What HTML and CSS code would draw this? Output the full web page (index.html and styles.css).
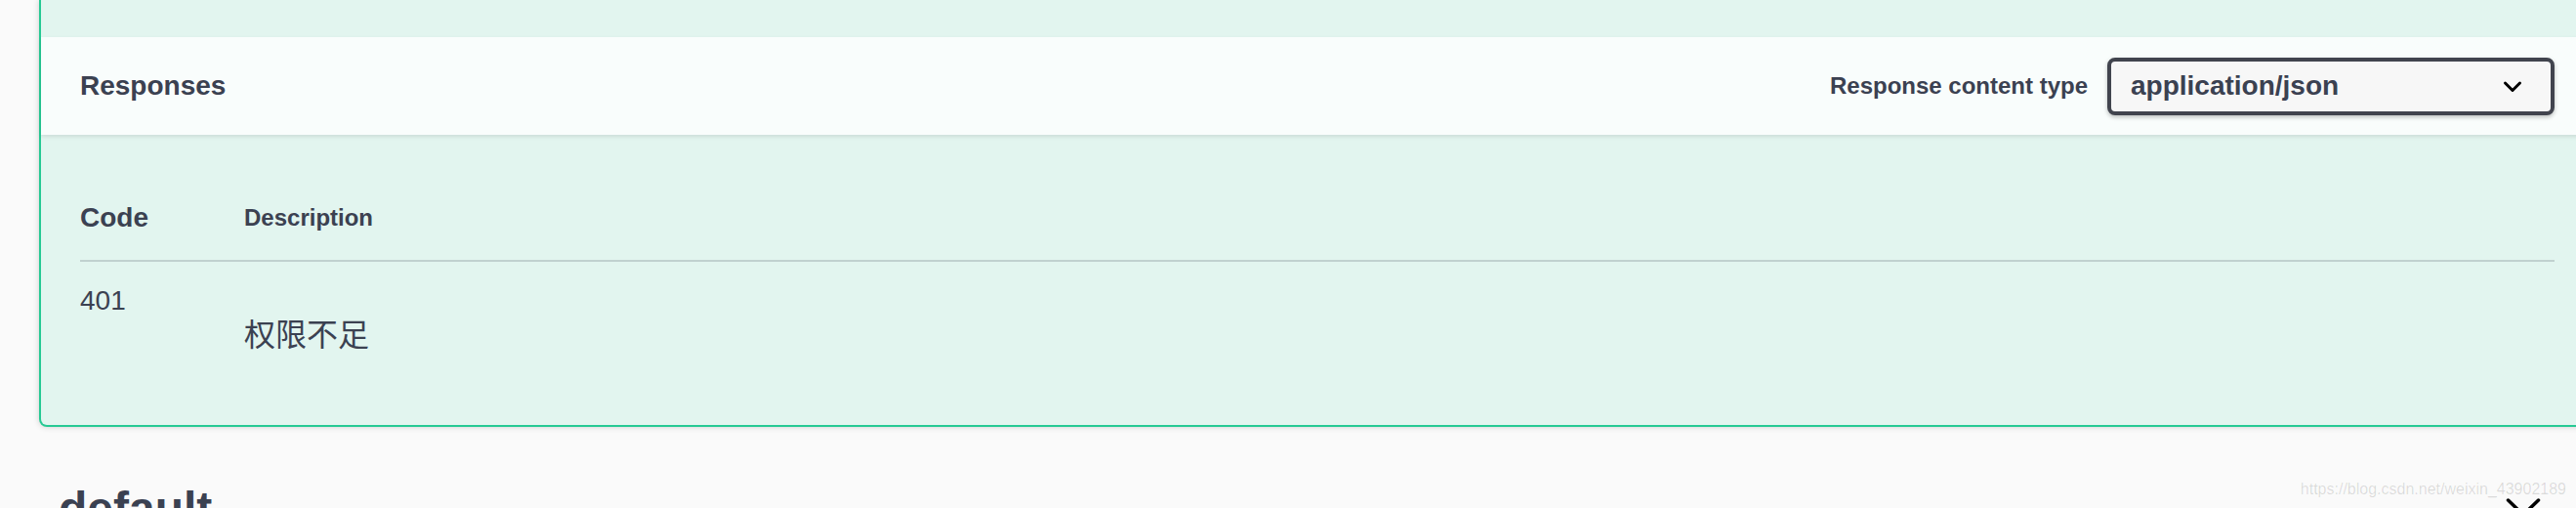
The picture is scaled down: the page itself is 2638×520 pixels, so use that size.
FILE: index.html
```html
<!DOCTYPE html>
<html lang="zh-CN">
<head>
<meta charset="utf-8">
<title>Responses</title>
<link rel="stylesheet" href="styles.css">
</head>
<body>
<div class="wrapper">
  <div class="opblock">
    <div class="opblock-top"></div>
    <div class="section-header">
      <h4 class="section-title">Responses</h4>
      <div class="content-type">
        <span class="content-type-label">Response content type</span>
        <div class="select">
          <span class="select-value">application/json</span>
          <svg class="select-arrow" width="40" height="40" viewBox="0 0 40 40"><polyline points="13.5,17 21,24.5 28.5,17" fill="none" stroke="#000" stroke-width="3" stroke-linecap="round" stroke-linejoin="round"/></svg>
        </div>
      </div>
    </div>
    <div class="responses-inner">
      <div class="responses-table">
        <div class="row head">
          <div class="col-status head-status">Code</div>
          <div class="col-desc head-desc">Description</div>
        </div>
        <div class="row response">
          <div class="col-status status">401</div>
          <div class="col-desc desc"><p class="markdown">权限不足</p></div>
        </div>
      </div>
    </div>
  </div>
  <h3 class="tag">
    <span class="tag-name">default</span>
    <svg class="expand-arrow" width="40" height="40" viewBox="0 0 40 40"><polyline points="4.5,14 20,29 35.5,14" fill="none" stroke="#000" stroke-width="3.5" stroke-linecap="round" stroke-linejoin="round"/></svg>
  </h3>
</div>
<div class="watermark">https://blog.csdn.net/weixin_43902189</div>
</body>
</html>
```
FILE: styles.css
```css
html, body {
  margin: 0;
  padding: 0;
  height: 520px;
  overflow: hidden;
  background: #fafafa;
}

body {
  position: relative;
  font-family: "Liberation Sans", Arial, "Noto Sans CJK SC", sans-serif;
  color: #3b4151;
}

.wrapper {
  width: 2618px;
  padding: 0 40px;
}

.opblock {
  border: 2px solid #26c993;
  border-top: none;
  border-radius: 0 0 8px 8px;
  background: #e2f5ef;
  box-shadow: 0 0 6px rgba(0, 0, 0, 0.19);
}

.opblock-top {
  height: 38px;
}

.section-header {
  display: flex;
  align-items: center;
  justify-content: space-between;
  box-sizing: border-box;
  height: 100px;
  padding: 0 40px;
  background: rgba(255, 255, 255, 0.8);
  box-shadow: 0 2px 4px rgba(0, 0, 0, 0.1);
}

.section-title {
  margin: 0;
  font-size: 28px;
  line-height: 32px;
  font-weight: 700;
}

.content-type {
  display: flex;
  align-items: center;
  gap: 20px;
}

.content-type-label {
  font-size: 24px;
  line-height: 32px;
  font-weight: 700;
}

.select {
  display: flex;
  align-items: center;
  justify-content: space-between;
  box-sizing: border-box;
  width: 458px;
  height: 59px;
  padding: 0 20px;
  border: 4px solid #41444e;
  border-radius: 8px;
  background: #f7f7f7;
  box-shadow: 0 2px 4px rgba(0, 0, 0, 0.25);
  font-size: 28px;
  line-height: 32px;
  font-weight: 700;
}

.select-arrow {
  display: block;
}

.responses-inner {
  padding: 40px 40px 47px;
}

.row {
  display: grid;
  grid-template-columns: 168px 1fr;
}

.row.head {
  align-items: end;
  border-bottom: 2px solid rgba(59, 65, 81, 0.2);
}

.head .col-status,
.head .col-desc {
  padding: 29px 0 27px;
  line-height: 32px;
  font-weight: 700;
}

.head-status {
  font-size: 28px;
}

.head-desc {
  font-size: 24px;
}

.row.response {
  align-items: start;
  padding-top: 24px;
}

.status {
  font-size: 28px;
  line-height: 32px;
}

.markdown {
  margin: 32px 0;
  font-family: "Noto Sans CJK SC", "Liberation Sans", sans-serif;
  font-size: 32px;
  line-height: 32px;
}

.tag {
  display: flex;
  align-items: flex-start;
  justify-content: space-between;
  margin: 56px 0 0;
  padding: 0 54px 0 20px;
  font-size: 48px;
  line-height: 55px;
  font-weight: 700;
}

.expand-arrow {
  display: block;
  margin-top: 5px;
}

.watermark {
  position: absolute;
  top: 492px;
  right: 10px;
  font-size: 16px;
  line-height: 18px;
  color: rgba(0, 0, 0, 0.13);
  white-space: nowrap;
}
```
